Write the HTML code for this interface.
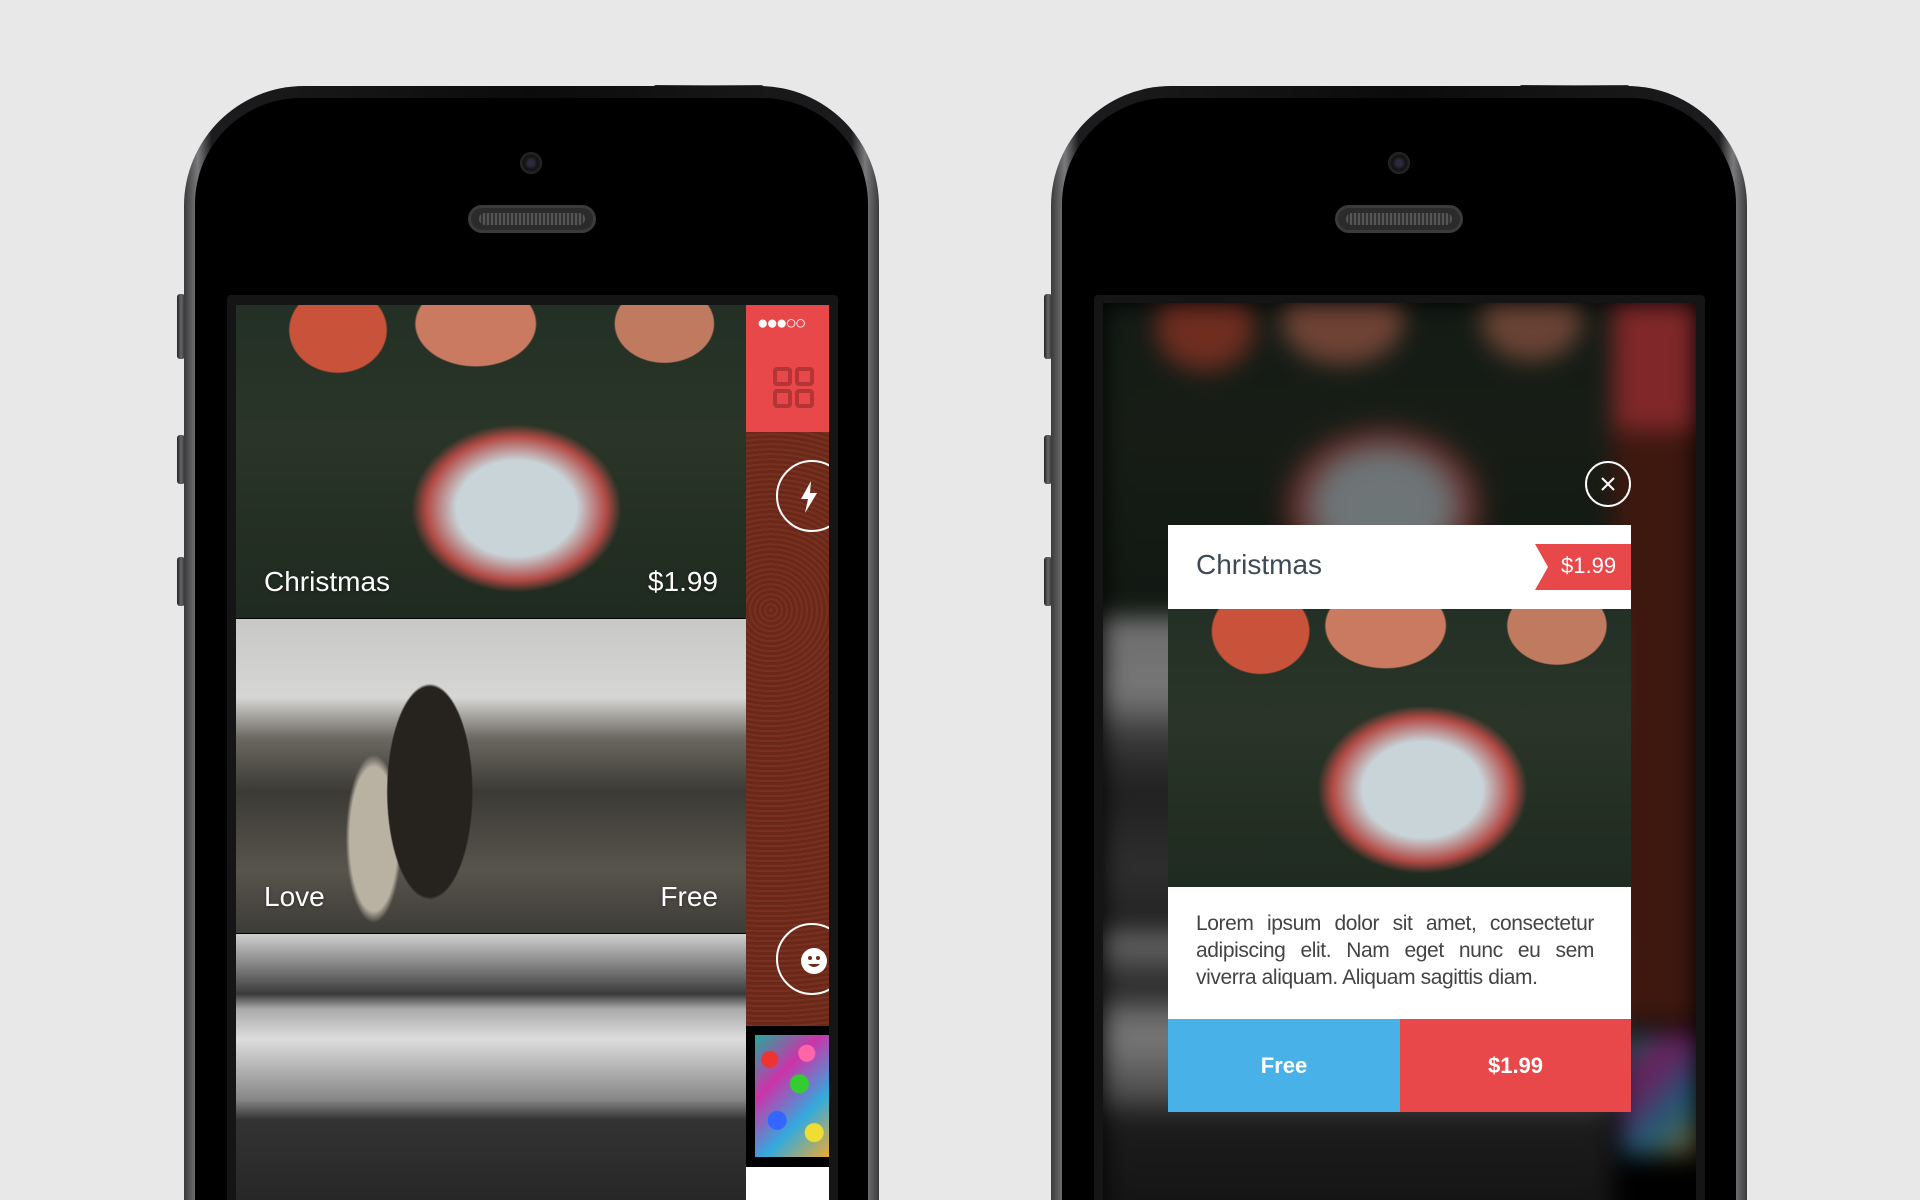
<!DOCTYPE html>
<html style="overflow:hidden;width:1920px;height:1200px"><head><meta charset="utf-8"><style>
*{margin:0;padding:0;box-sizing:border-box}
html,body{width:1920px;height:1200px;overflow:hidden}
body{background:#e8e8e8;position:relative;font-family:"Liberation Sans",sans-serif}
.abs{position:absolute}
.body{position:absolute;top:86px;height:1114px;border-radius:120px 120px 0 0;background:linear-gradient(90deg,#3a3a3c,#7a7a7d 2%,#1c1c1e 4%,#0b0b0b 50%,#1c1c1e 96%,#7a7a7d 98%,#3a3a3c)}
.inner{position:absolute;top:98px;height:1102px;border-radius:106px 106px 0 0;background:#000}
.btn{position:absolute;background:linear-gradient(90deg,#222,#666,#333);border-radius:3px}
.cam{position:absolute;width:22px;height:22px;border-radius:50%;background:radial-gradient(circle,#2a2a3a 20%,#111 45%,#2a2a2a 70%,#111)}
.spk{position:absolute;width:128px;height:28px;border-radius:14px;background:#2b2b2b;border:3px solid #3b3b3b}
.spk:after{content:"";position:absolute;left:8px;right:8px;top:5px;bottom:5px;border-radius:8px;background:repeating-linear-gradient(90deg,#555 0 2px,#333 2px 4px)}
.tile1{background:radial-gradient(ellipse 80px 70px at 20% 8%,#c9523b 60%,transparent 62%),radial-gradient(ellipse 85px 60px at 47% 6%,#c97a60 70%,transparent 72%),radial-gradient(ellipse 70px 55px at 84% 6%,#c07a60 70%,transparent 72%),radial-gradient(ellipse 150px 120px at 55% 65%,#c8d4d8 40%,#b24a45 60%,transparent 70%),linear-gradient(#233025,#2a3528 40%,#1f2a20)}
.tile2{background:radial-gradient(ellipse 60px 150px at 38% 55%,#26231f 70%,transparent 72%),radial-gradient(ellipse 40px 120px at 27% 70%,#b9b2a3 60%,transparent 70%),linear-gradient(#c8c8c6,#d6d6d4 25%,#6a6860 38%,#3b3a34 55%,#57544c 80%,#3e3c37)}
.tile3{background:linear-gradient(#cfcfcf,#777 12%,#3a3a3a 20%,#aaa 25%,#ddd 35%,#888 55%,#333 62%,#222)}
.cap{position:absolute;color:#fff;font-size:28px;bottom:20px;text-shadow:0 1px 3px rgba(0,0,0,.4)}
.brown{background:repeating-radial-gradient(circle at 30% 30%,#7a3020 0 2px,#6a2818 2px 5px),#6e2a1a}
.ring{position:absolute;width:72px;height:72px;border:2px solid #fff;border-radius:50%}
</style></head><body>

<!-- LEFT PHONE -->
<div class="btn" style="left:653px;top:85px;width:111px;height:9px"></div>
<div class="btn" style="left:177px;top:294px;width:8px;height:65px"></div>
<div class="btn" style="left:177px;top:435px;width:8px;height:49px"></div>
<div class="btn" style="left:177px;top:557px;width:8px;height:49px"></div>
<div class="body" style="left:184px;width:695px"></div>
<div class="inner" style="left:195px;width:673px"></div>
<div class="cam" style="left:520px;top:152px"></div>
<div class="spk" style="left:468px;top:205px"></div>
<div class="abs" style="left:227px;top:295px;width:611px;height:905px;background:#151515;border-radius:4px 4px 0 0"></div>
<div class="abs" style="left:236px;top:305px;width:593px;height:895px;overflow:hidden;background:#000">
  <div class="abs tile1" style="left:0;top:0;width:510px;height:313px"><div class="cap" style="left:28px">Christmas</div><div class="cap" style="right:28px">$1.99</div></div>
  <div class="abs tile2" style="left:0;top:314px;width:510px;height:314px"><div class="cap" style="left:28px">Love</div><div class="cap" style="right:28px">Free</div></div>
  <div class="abs tile3" style="left:0;top:629px;width:510px;height:300px"></div>
  <div class="abs" style="left:510px;top:0;width:83px;height:127px;background:#e9484a">
    <div class="abs" style="left:11px;top:8px;font-size:19px;color:#fff;letter-spacing:-2px">●●●○○</div>
    <svg class="abs" style="left:27px;top:62px" width="42" height="42" viewBox="0 0 42 42" fill="none" stroke="#b53537" stroke-width="4"><rect x="2" y="2" width="15" height="15" rx="2"/><rect x="24" y="2" width="15" height="15" rx="2"/><rect x="2" y="24" width="15" height="15" rx="2"/><rect x="24" y="24" width="15" height="15" rx="2"/></svg>
  </div>
  <div class="abs brown" style="left:510px;top:127px;width:83px;height:594px">
    <div class="ring" style="left:30px;top:28px"></div>
    <svg class="abs" style="left:53px;top:49px" width="20" height="32" viewBox="0 0 20 32"><path d="M12 0L2 18h7l-3 14 12-20h-7z" fill="#fff"/></svg>
    <div class="ring" style="left:30px;top:491px"></div>
    <svg class="abs" style="left:54px;top:515px" width="28" height="28" viewBox="0 0 28 28"><circle cx="14" cy="14" r="13" fill="#fff"/><circle cx="10" cy="11" r="2" fill="#6e2a1a"/><circle cx="18" cy="11" r="2" fill="#6e2a1a"/><path d="M8 17q6 6 12 0z" fill="#6e2a1a"/></svg>
  </div>
  <div class="abs" style="left:510px;top:721px;width:83px;height:9px;background:#000"></div>
  <div class="abs" style="left:519px;top:730px;width:74px;height:122px;background:radial-gradient(circle at 20% 20%,#e33 8px,transparent 9px),radial-gradient(circle at 60% 40%,#3c3 9px,transparent 10px),radial-gradient(circle at 30% 70%,#36f 9px,transparent 10px),radial-gradient(circle at 80% 80%,#ed3 9px,transparent 10px),radial-gradient(circle at 70% 15%,#f6a 8px,transparent 9px),linear-gradient(135deg,#2a9,#c3a,#3ad,#ea3)"></div>
  <div class="abs" style="left:510px;top:852px;width:83px;height:10px;background:#000"></div>
  <div class="abs" style="left:510px;top:862px;width:83px;height:60px;background:#fff"></div>
</div>

<!-- RIGHT PHONE -->
<div class="btn" style="left:1519px;top:85px;width:111px;height:9px"></div>
<div class="btn" style="left:1044px;top:294px;width:8px;height:65px"></div>
<div class="btn" style="left:1044px;top:435px;width:8px;height:49px"></div>
<div class="btn" style="left:1044px;top:557px;width:8px;height:49px"></div>
<div class="body" style="left:1051px;width:696px"></div>
<div class="inner" style="left:1062px;width:674px"></div>
<div class="cam" style="left:1388px;top:152px"></div>
<div class="spk" style="left:1335px;top:205px"></div>
<div class="abs" style="left:1094px;top:295px;width:611px;height:905px;background:#151515;border-radius:4px 4px 0 0"></div>
<div class="abs" style="left:1103px;top:303px;width:593px;height:897px;overflow:hidden;background:#000">
  <div class="abs" style="left:-20px;top:-20px;width:633px;height:940px;filter:blur(12px) brightness(.55)">
    <div class="abs tile1" style="left:20px;top:20px;width:510px;height:313px"></div>
    <div class="abs tile2" style="left:20px;top:334px;width:510px;height:314px;filter:grayscale(1)"></div>
    <div class="abs tile3" style="left:20px;top:649px;width:510px;height:300px"></div>
    <div class="abs" style="left:530px;top:20px;width:83px;height:127px;background:#e9484a"></div>
    <div class="abs brown" style="left:530px;top:147px;width:83px;height:594px"></div>
    <div class="abs" style="left:539px;top:750px;width:74px;height:122px;background:linear-gradient(135deg,#2a9,#c3a,#3ad,#ea3)"></div>
  </div>
</div>
<!-- close -->
<div class="abs" style="left:1585px;top:461px;width:46px;height:46px;border:2px solid #fff;border-radius:50%"></div>
<svg class="abs" style="left:1600px;top:476px" width="16" height="16" viewBox="0 0 16 16" stroke="#fff" stroke-width="2"><path d="M2 2L14 14M14 2L2 14"/></svg>
<!-- modal -->
<div class="abs" style="left:1168px;top:525px;width:463px;height:587px;background:#fff">
  <div class="abs" style="left:28px;top:24px;font-size:28px;color:#3e4a55">Christmas</div>
  <div class="abs" style="left:367px;top:19px;width:96px;height:46px;background:#e9484a;clip-path:polygon(0 0,100% 0,100% 100%,0 100%,13px 50%)"></div>
  <div class="abs" style="left:393px;top:28px;font-size:22px;color:#fff">$1.99</div>
  <div class="abs tile1" style="left:0;top:84px;width:463px;height:278px"></div>
  <div class="abs" style="left:28px;top:385px;width:398px;font-size:21px;line-height:27px;color:#444;text-align:justify;letter-spacing:-.4px">Lorem ipsum dolor sit amet, consectetur adipiscing elit. Nam eget nunc eu sem viverra aliquam. Aliquam sagittis diam.</div>
  <div class="abs" style="left:0;top:494px;width:232px;height:93px;background:#48b1e7;color:#fff;font-size:22px;font-weight:bold;text-align:center;line-height:93px">Free</div>
  <div class="abs" style="left:232px;top:494px;width:231px;height:93px;background:#e9484a;color:#fff;font-size:22px;font-weight:bold;text-align:center;line-height:93px">$1.99</div>
</div>
</body></html>
